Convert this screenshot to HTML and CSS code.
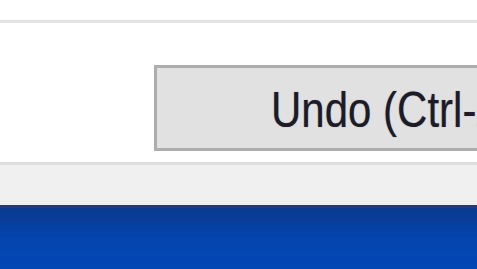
FILE: index.html
```html
<!DOCTYPE html>
<html>
<head>
<meta charset="utf-8">
<link rel="stylesheet" href="styles.css">
</head>
<body>
<div class="screen">
  <div class="top"></div>
  <div class="rule"></div>
  <div class="content">
    <div class="button"><span class="label">Undo (Ctrl-Z)</span></div>
  </div>
  <div class="rule rule-bottom"></div>
  <div class="footer"></div>
  <div class="taskbar"></div>
</div>
</body>
</html>
```
FILE: styles.css
```css
html, body {
  margin: 0;
  padding: 0;
  background: #ffffff;
}
.screen {
  width: 477px;
  height: 269px;
  overflow: hidden;
  display: flex;
  flex-direction: column;
}
.top {
  height: 20px;
  background: #ffffff;
  flex: none;
}
.rule {
  height: 3px;
  background: #e3e3e3;
  box-shadow: 0 0 1px #eaeaea;
  flex: none;
}
.content {
  height: 139px;
  flex: none;
  background: #ffffff;
  padding: 42px 0 0 154px;
  box-sizing: border-box;
  display: flex;
  align-items: flex-start;
}
.button {
  flex: none;
  width: 420px;
  height: 86px;
  box-sizing: border-box;
  border: 3px solid #adadad;
  background: #e1e1e1;
  display: flex;
  align-items: center;
  padding-left: 114px;
}
.label {
  font-family: "Liberation Sans", Arial, sans-serif;
  font-size: 50px;
  color: #1c1c28;
  white-space: nowrap;
  line-height: 1;
  margin-top: 3px;
  display: inline-block;
  transform: scaleX(0.84);
  transform-origin: left center;
  text-shadow: 0 0 1px rgba(40, 30, 70, 0.5);
}
.rule-bottom {
  background: #dedede;
}
.footer {
  height: 40px;
  flex: none;
  background: #f0f0f0;
}
.taskbar {
  flex: 1;
  border-top: 3px solid #253c6c;
  background: linear-gradient(to bottom, #0a3a8e 0%, #0444ae 50%, #0347b5 100%);
}
```
